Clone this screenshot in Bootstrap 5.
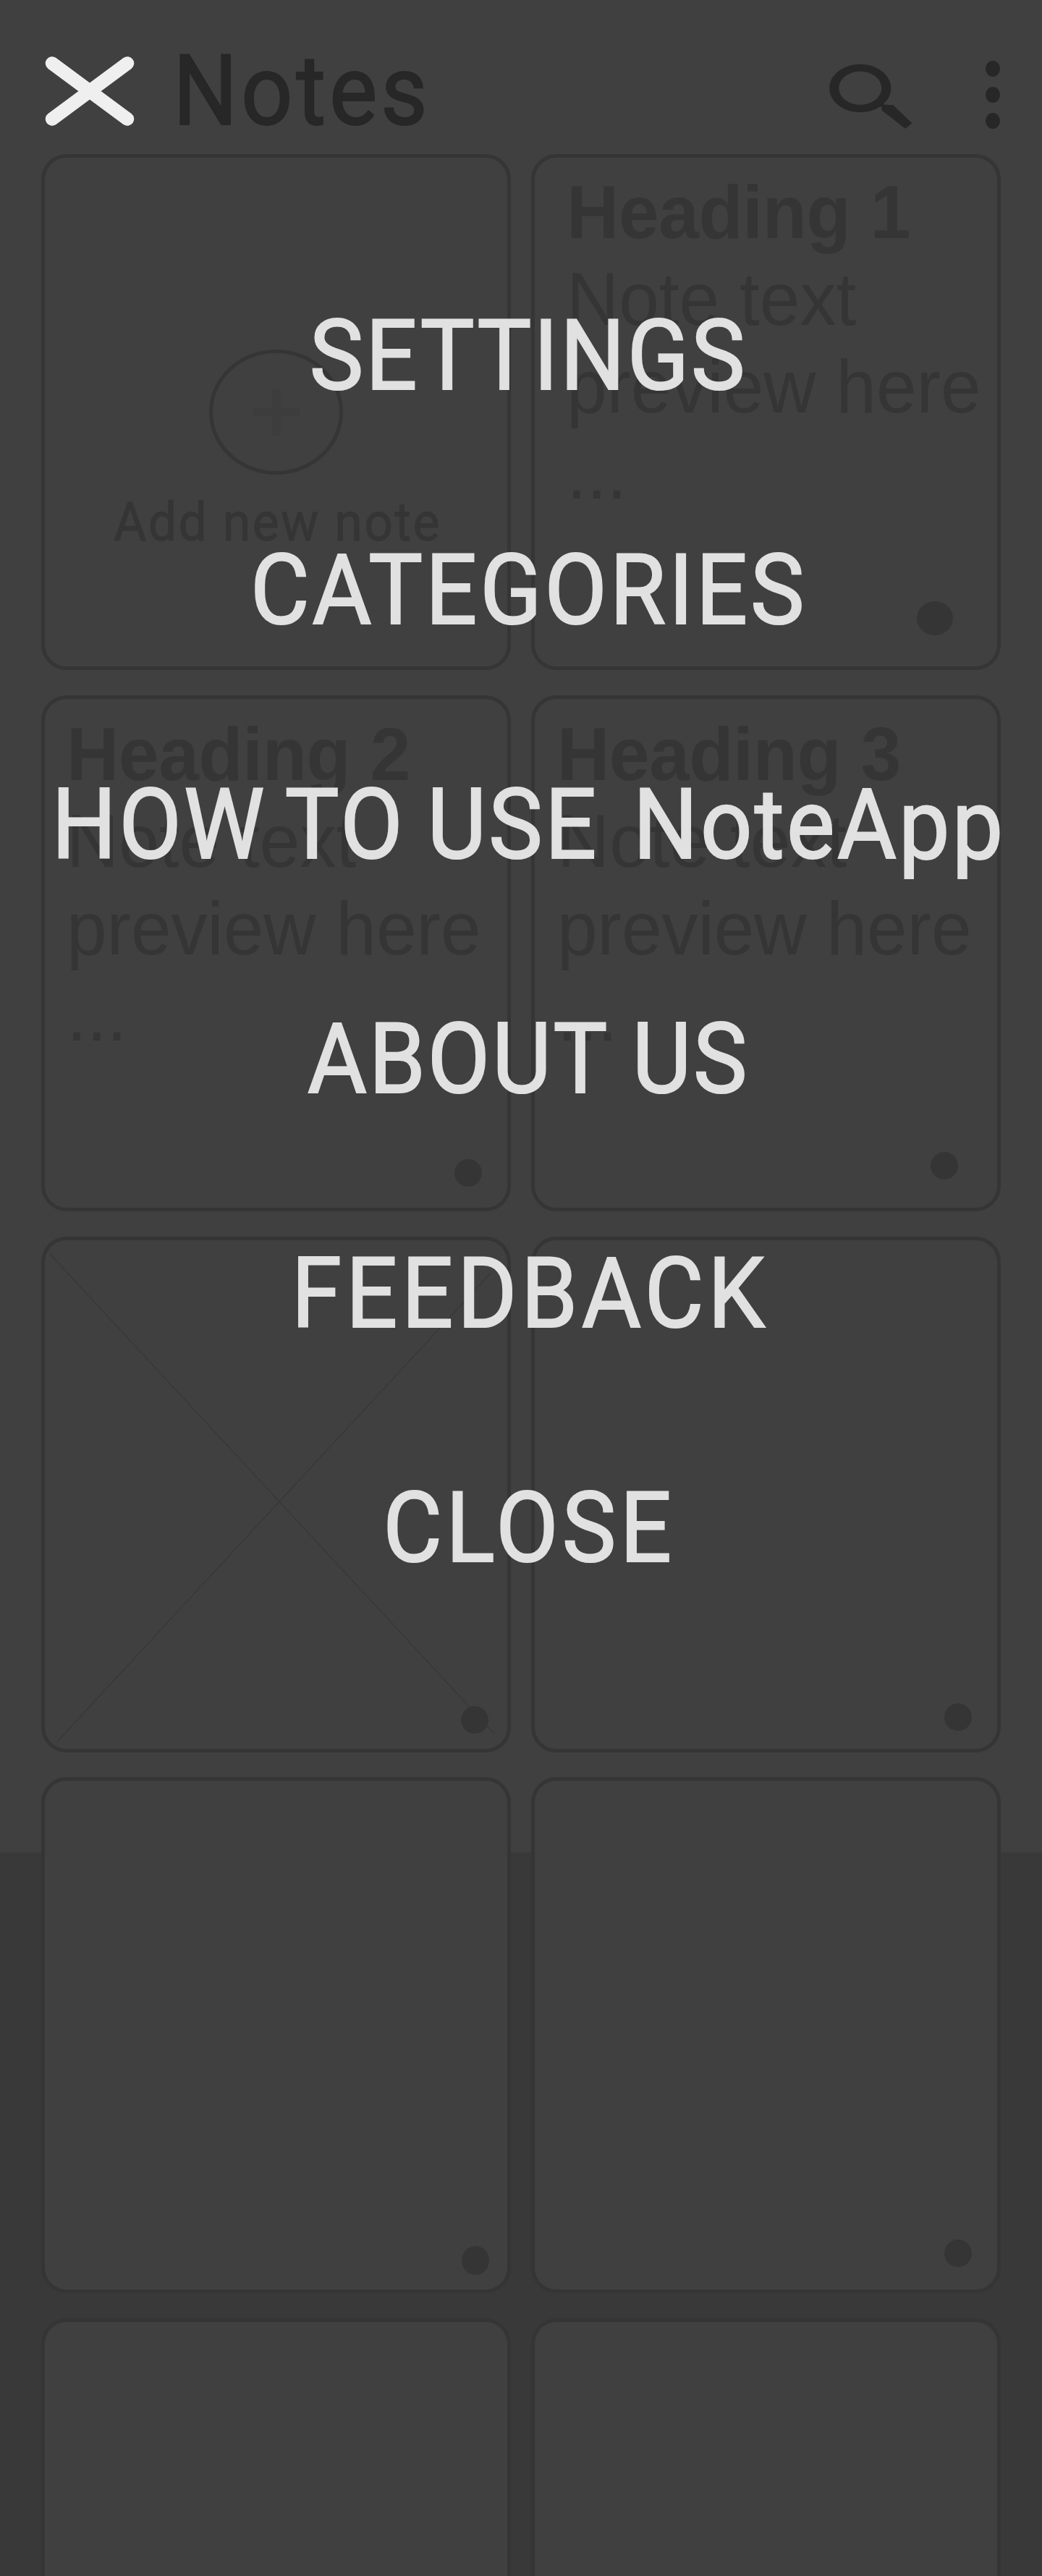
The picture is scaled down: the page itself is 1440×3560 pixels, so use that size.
<!DOCTYPE html>
<html lang="en">
<head>
<meta charset="utf-8">
<meta name="viewport" content="width=device-width, initial-scale=1">
<title>NoteApp – Menu</title>
<link href="https://cdn.jsdelivr.net/npm/bootstrap@5.3.0/dist/css/bootstrap.min.css" rel="stylesheet">
<style>
  :root { --surface: #404040; --backdrop: #393939; --ink: #353535; --ink-strong: #272727; }
  body { background: var(--backdrop); }
  .app { width: 1440px; height: 3560px; background: linear-gradient(var(--surface) 2560px, var(--backdrop) 2560px); }

  /* top bar */
  .topbar { height: 213px; padding: 0 58px 0 62px; }
  .topbar .close-btn { margin-top: 78px; }
  .topbar .search-icon { margin: 88px 101px 0 0; }
  .topbar .more-icon { margin-top: 84px; }
  .din { font-family: Roboto, "Liberation Sans", sans-serif; font-weight: 400; white-space: nowrap; }
  .app-title { font-size: 135px; line-height: 140px; letter-spacing: 4.9px; color: var(--ink-strong);
    margin: 56px 0 0 53px; transform: scaleX(.93); transform-origin: left; -webkit-text-stroke: 2px var(--ink-strong); }

  /* notes */
  .notes { display: grid; grid-template-columns: 649px 649px; column-gap: 28px; row-gap: 34.75px; padding-left: 57px; }
  .note { height: 713px; background: var(--surface); border: 5px solid var(--ink); border-radius: 35px; color: var(--ink); }
  .note-text { font: 400 100px/115.4px "Liberation Sans", Arial, sans-serif; white-space: nowrap;
    padding: 15px 0 0 44px; transform: scaleY(1.04); transform-origin: top; }
  .note-text h2 { font: inherit; font-weight: 700; margin: 0; letter-spacing: -.3px; }
  .note-text p { margin: 0; }
  .note-2 .note-text { padding: 16px 0 0 30px; }
  .note-3 .note-text { padding: 16px 0 0 31px; }
  .add-ring { margin-top: 265px; }
  .add-label { font-size: 75px; line-height: 80px; letter-spacing: 2.5px; margin: 25px 0 0 4px; transform: scaleX(.93); -webkit-text-stroke: .8px var(--ink); }
  .dot { width: 38px; height: 38px; background: var(--ink); }
  .note-1 .dot { width: 50px; height: 47px; right: 61px; bottom: 43px; }
  .note-2 .dot { right: 35px; bottom: 29px; }
  .note-3 .dot { right: 54px; bottom: 39px; }
  .note-4 .dot { right: 26px; bottom: 21px; }
  .note-5 .dot { right: 35px; bottom: 25px; }
  .note-6 .dot { right: 25px; bottom: 20px; height: 40px; }
  .note-7 .dot { right: 35px; bottom: 31px; }
  .cross { left: 0; top: 0; }

  /* menu overlay */
  .menu { padding: 411px 0 0 21px; gap: 162px; }
  .menu a { display: block; font-size: 135px; line-height: 162px; color: #e1e1e1; transform: scaleX(.93); -webkit-text-stroke: 2.2px #e1e1e1; }
  .ls-a { letter-spacing: 3.1px; }
  .ls-b { letter-spacing: 4.1px; }
  .ls-c { letter-spacing: 3.5px; }
  .ls-c .w-to { margin-left: -10px; }
  .ls-c .w-use { margin-left: -4px; }
  .ls-c .w-app { margin-left: 14px; }
  .ls-d { letter-spacing: 6.1px; margin-left: 5px; }
  .ls-e { letter-spacing: 5.7px; margin-left: 1px; }
</style>
</head>
<body>
<div class="app position-relative overflow-hidden">
  <header class="topbar d-flex align-items-start">
    <button class="close-btn btn p-0 border-0 lh-1" aria-label="Close menu">
      <svg class="d-block" width="124" height="96" viewBox="0 0 124 96"><path d="M10 9.500 114 86.500M114 9.500 10 86.500" stroke="#efefef" stroke-width="18.500" stroke-linecap="round"/></svg>
    </button>
    <h1 class="app-title din">Notes</h1>
    <svg class="search-icon ms-auto flex-shrink-0" width="115" height="90" viewBox="0 0 115 90" fill="#272727">
      <path fill-rule="evenodd" d="M42.800 .8c23.600 0 42.600 14.900 42.600 33.200S66.400 67.200 42.800 67.200.2 52.300.2 34 19.200.8 42.800.8Zm0 10c-16.300 0-29.500 10.300-29.500 23s13.200 23 29.500 23 29.500-10.300 29.500-23-13.200-23-29.500-23Z"/>
      <path d="M75 55.500 76 56.500 82 57h6L114.500 82.300 105 89.800 72.500 64.500v-4L69 57Z"/>
    </svg>
    <svg class="more-icon flex-shrink-0" width="20" height="94" viewBox="0 0 20 94" fill="#272727"><ellipse cx="10" cy="11" rx="10" ry="11"/><ellipse cx="10" cy="47" rx="10" ry="11"/><ellipse cx="10" cy="83" rx="10" ry="11"/></svg>
  </header>

  <main class="notes">
    <section class="note d-flex flex-column align-items-center">
      <svg class="add-ring d-block flex-shrink-0" width="185" height="173" viewBox="0 0 185 173"><ellipse cx="92.500" cy="86.500" rx="90" ry="84" fill="none" stroke="#353535" stroke-width="5"/><path d="M87 54h12v27h26v11H99v27H87V92H60.500V81H87Z" fill="#3d3d3d"/></svg>
      <div class="add-label din">Add new note</div>
    </section>
    <section class="note note-1 position-relative">
      <div class="note-text"><h2>Heading 1</h2><p>Note text<br>preview here<br>...</p></div>
      <span class="dot rounded-circle position-absolute"></span>
    </section>
    <section class="note note-2 position-relative">
      <div class="note-text"><h2>Heading 2</h2><p>Note text<br>preview here<br>...</p></div>
      <span class="dot rounded-circle position-absolute"></span>
    </section>
    <section class="note note-3 position-relative">
      <div class="note-text"><h2>Heading 3</h2><p>Note text<br>preview here<br>...</p></div>
      <span class="dot rounded-circle position-absolute"></span>
    </section>
    <section class="note note-4 position-relative">
      <svg class="cross position-absolute" width="639" height="703" viewBox="0 0 639 703" fill="none" stroke="#373737" stroke-width="1.200"><path d="M7 19 622 683M18 692 616 45.500"/></svg>
      <span class="dot rounded-circle position-absolute"></span>
    </section>
    <section class="note note-5 position-relative"><span class="dot rounded-circle position-absolute"></span></section>
    <section class="note note-6 position-relative"><span class="dot rounded-circle position-absolute"></span></section>
    <section class="note note-7 position-relative"><span class="dot rounded-circle position-absolute"></span></section>
    <section class="note"></section>
    <section class="note"></section>
  </main>

  <nav class="position-absolute top-0 start-0 w-100">
    <ul class="menu list-unstyled d-flex flex-column align-items-center m-0">
      <li><a class="din text-decoration-none ls-a" href="#">SETTINGS</a></li>
      <li><a class="din text-decoration-none ls-b" href="#">CATEGORIES</a></li>
      <li><a class="din text-decoration-none ls-c" href="#">HOW <span class="w-to">TO</span> <span class="w-use">USE</span> <span class="w-app">NoteApp</span></a></li>
      <li><a class="din text-decoration-none ls-a" href="#">ABOUT US</a></li>
      <li><a class="din text-decoration-none ls-d" href="#">FEEDBACK</a></li>
      <li><a class="din text-decoration-none ls-e" href="#">CLOSE</a></li>
    </ul>
  </nav>
</div>
<script src="https://cdn.jsdelivr.net/npm/bootstrap@5.3.0/dist/js/bootstrap.bundle.min.js"></script>
</body>
</html>
